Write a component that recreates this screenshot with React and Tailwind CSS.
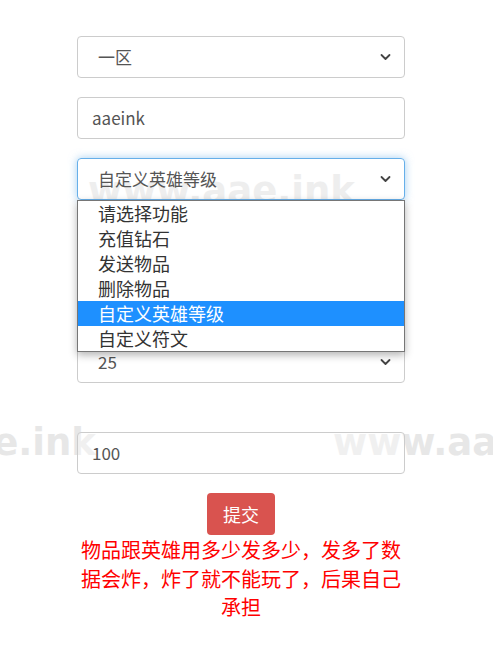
import { useState } from 'react'

const FONT = { fontFamily: '"Noto Sans CJK SC", "Microsoft YaHei", sans-serif' }

const OPTIONS = ['请选择功能', '充值钻石', '发送物品', '删除物品', '自定义英雄等级', '自定义符文']

function Chevron() {
  return (
    <svg className="absolute right-[13px] top-1/2 -translate-y-1/2 w-[11px] h-[8px]" viewBox="0 0 11 8" fill="none">
      <path d="M1.5 2l4 4 4-4" stroke="#444" strokeWidth="1.8" strokeLinecap="round" strokeLinejoin="round" />
    </svg>
  )
}

function SelectBox({ value, focused, children }) {
  return (
    <div
      className={`relative h-[42px] rounded-[4px] border bg-white/30 flex items-center pl-[20px] text-[17px] text-[#555] ${
        focused
          ? 'border-[#66afe9] shadow-[0_0_8px_rgba(102,175,233,0.6)]'
          : 'border-[#ccc]'
      }`}
    >
      {value}
      <Chevron />
      {children}
    </div>
  )
}

function TextBox({ value }) {
  return (
    <div className="h-[42px] rounded-[4px] border border-[#ccc] bg-white/40 flex items-center pl-[14px] text-[17px] text-[#555]">
      {value}
    </div>
  )
}

export default function App() {
  const [active] = useState(4)

  return (
    <div className="relative w-[493px] h-[647px] bg-white overflow-hidden" style={FONT}>
      {/* 水印 */}
      <div
        className="absolute inset-0 pointer-events-none text-[37px] leading-none font-bold text-[#e7e7e7] whitespace-nowrap"
        style={{ fontFamily: '"DejaVu Sans", sans-serif' }}
      >
        <span className="absolute left-[88px] top-[172px]">www.aae.ink</span>
        <span className="absolute left-[-171px] top-[424px]">www.aae.ink</span>
        <span className="absolute left-[333px] top-[424px]">www.aae.ink</span>
      </div>

      <div className="relative ml-[77px] w-[328px] pt-[36px] flex flex-col">
        <SelectBox value="一区" />
        <div className="mt-[19px]">
          <TextBox value="aaeink" />
        </div>
        <div className="mt-[19px] relative z-20">
          <SelectBox value="自定义英雄等级" focused>
            {/* 下拉列表 */}
            <div className="absolute left-[-1px] right-[-1px] top-[41px] border border-[#767676] bg-white shadow-[0_3px_8px_rgba(0,0,0,0.3)]">
              {OPTIONS.map((opt, idx) => (
                <div
                  key={opt}
                  className={`h-[25px] leading-[25px] pl-[20px] text-[18px] ${
                    idx === active ? 'bg-[#1e90ff] text-white' : 'text-[#333]'
                  }`}
                >
                  {opt}
                </div>
              ))}
            </div>
          </SelectBox>
        </div>
        <div className="mt-[19px]">
          <TextBox value="" />
        </div>
        <div className="mt-[19px]">
          <TextBox value="" />
        </div>
        <div className="mt-[19px]">
          <SelectBox value="25" />
        </div>
        <div className="mt-[49px]">
          <TextBox value="100" />
        </div>
        <div className="mt-[19px] flex justify-center">
          <button className="w-[68px] h-[42px] rounded-[4px] bg-[#d9534f] text-white text-[18px]">提交</button>
        </div>
        <p className="mt-[1px] text-center text-[20px] leading-[28.5px] text-[#ff0000]">
          物品跟英雄用多少发多少，发多了数据会炸，炸了就不能玩了，后果自己承担
        </p>
      </div>
    </div>
  )
}
